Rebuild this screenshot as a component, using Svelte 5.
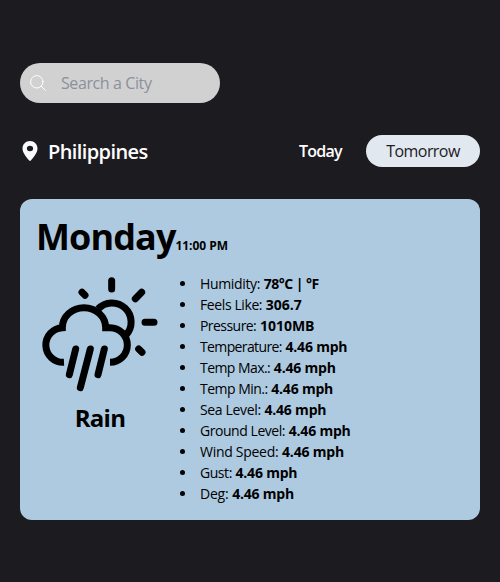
<script>
  // label, value, label tracking, value tracking (px)
  const details = [
    ['Humidity', '78°C | °F', -0.35, -0.5],
    ['Feels Like', '306.7', -0.4, 0],
    ['Pressure', '1010MB', -0.55, 0],
    ['Temperature', '4.46 mph', -0.62, -0.2],
    ['Temp Max.', '4.46 mph', -0.56, -0.2],
    ['Temp Min.', '4.46 mph', -0.52, -0.2],
    ['Sea Level', '4.46 mph', -0.34, -0.2],
    ['Ground Level', '4.46 mph', -0.45, -0.2],
    ['Wind Speed', '4.46 mph', -0.28, -0.2],
    ['Gust', '4.46 mph', -0.45, -0.2],
    ['Deg', '4.46 mph', -0.2, -0.2]
  ];
</script>

<main>
  <label class="search">
    <svg width="16" height="16" viewBox="0 0 16 16" fill="none" stroke="#fff" stroke-width="1" stroke-linecap="round">
      <circle cx="6.8" cy="6.8" r="6.2" />
      <path d="M11.300 11.300 15.300 15.300" />
    </svg>
    <input type="text" placeholder="Search a City" />
  </label>

  <div class="bar">
    <div class="place">
      <svg width="16" height="20" viewBox="0 0 16 20" fill="#f8fafc">
        <path fill-rule="evenodd" d="M8 0C3.7 0 .5 3.3.5 7.5.5 12 5 17 7.2 19.5c.5.5 1.1.5 1.6 0C11 17 15.5 12 15.5 7.5 15.5 3.300 12.300 0 8 0Zm0 4.700a3.100 2.800 0 1 1 0 5.600 3.100 2.800 0 0 1 0-5.600Z" />
      </svg>
      <span>Philippines</span>
    </div>
    <nav>
      <button class="today">Today</button>
      <button class="tomorrow">Tomorrow</button>
    </nav>
  </div>

  <section class="card">
    <header><h1>Monday</h1><time>11:00 PM</time></header>
    <div class="content">
      <div class="condition">
        <svg width="120" height="120" viewBox="30 30 360 360" fill="none" stroke="#000" stroke-width="21">
          <path d="M102 292A52 52 0 0 1 97 188A65 60 0 0 1 227 188H240A52 52 0 0 1 240 292" />
          <path d="M204 132A57 57 0 0 1 288 210" />
          <g stroke-linecap="round">
            <path d="M245 47V72M156 82L165 91M335 82L316 101M345 172H372M326 252L336 262" />
            <path d="M137 252L118 329M181 252L151 368M223 252L204 329" />
          </g>
        </svg>
        <h2>Rain</h2>
      </div>
      <ul>
        {#each details as [label, value, labelTracking, valueTracking]}
          <li><span style:letter-spacing="{labelTracking}px">{label}:</span>{' '}<b style:letter-spacing="{valueTracking}px">{value}</b></li>
        {/each}
      </ul>
    </div>
  </section>
</main>

<style>
  :global(body) {
    margin: 0;
    background: #1c1b1f;
  }
  main {
    box-sizing: border-box;
    min-height: 582px;
    padding: 63px 20px 62px;
    font-family: "Open Sans", "Noto Sans", sans-serif;
    color: #000;
  }
  .search {
    box-sizing: border-box;
    display: flex;
    align-items: center;
    width: 200px;
    height: 40px;
    padding-left: 10px;
    border-radius: 20px;
    background: #d1d1d1;
  }
  .search input {
    flex: 1;
    min-width: 0;
    margin-left: 15px;
    padding: 0;
    border: 0;
    outline: 0;
    background: none;
    font: 400 16px "Open Sans", sans-serif;
    letter-spacing: -0.4px;
  }
  .search input::placeholder {
    color: #8b909b;
    opacity: 1;
  }
  .bar {
    display: flex;
    justify-content: space-between;
    align-items: center;
    height: 32px;
    margin-top: 32px;
  }
  .place {
    display: flex;
    align-items: center;
    gap: 10px;
    padding-left: 2px;
    color: #fff;
    font-size: 20px;
    font-weight: 600;
    letter-spacing: -0.6px;
  }
  nav {
    display: flex;
    align-items: center;
    gap: 24px;
  }
  button {
    padding: 0;
    border: 0;
    background: none;
    font: 600 16px "Open Sans", sans-serif;
    white-space: nowrap;
  }
  .today {
    width: 43px;
    color: #fff;
    letter-spacing: -0.75px;
  }
  .tomorrow {
    width: 114px;
    height: 32px;
    border-radius: 16px;
    background: #e2e8f0;
    color: #1c1b1f;
    font-weight: 500;
    letter-spacing: -0.55px;
  }
  .card {
    box-sizing: border-box;
    height: 321px;
    margin-top: 32px;
    padding: 16px;
    border-radius: 12px;
    background: #aecae0;
  }
  header {
    display: flex;
    align-items: baseline;
    height: 45px;
  }
  h1 {
    margin: 0;
    font-size: 36px;
    line-height: 44px;
    letter-spacing: -0.9px;
  }
  time {
    font-size: 12px;
    font-weight: 700;
    letter-spacing: -0.05px;
  }
  .content {
    display: flex;
    margin-top: 13px;
  }
  .condition {
    width: 120px;
    margin-left: 4px;
    text-align: center;
  }
  .condition svg {
    display: block;
    margin-top: 2px;
  }
  h2 {
    margin: 7px 0 0;
    font-size: 24px;
    line-height: 32px;
    letter-spacing: -0.7px;
  }
  ul {
    margin: 0 0 0 40px;
    padding: 0;
    list-style: none;
    font-size: 14px;
    line-height: 21px;
    white-space: nowrap;
  }
  li {
    position: relative;
  }
  li::before {
    content: "";
    position: absolute;
    left: -20px;
    top: 8px;
    width: 5px;
    height: 5px;
    border-radius: 50%;
    background: #000;
  }
</style>
